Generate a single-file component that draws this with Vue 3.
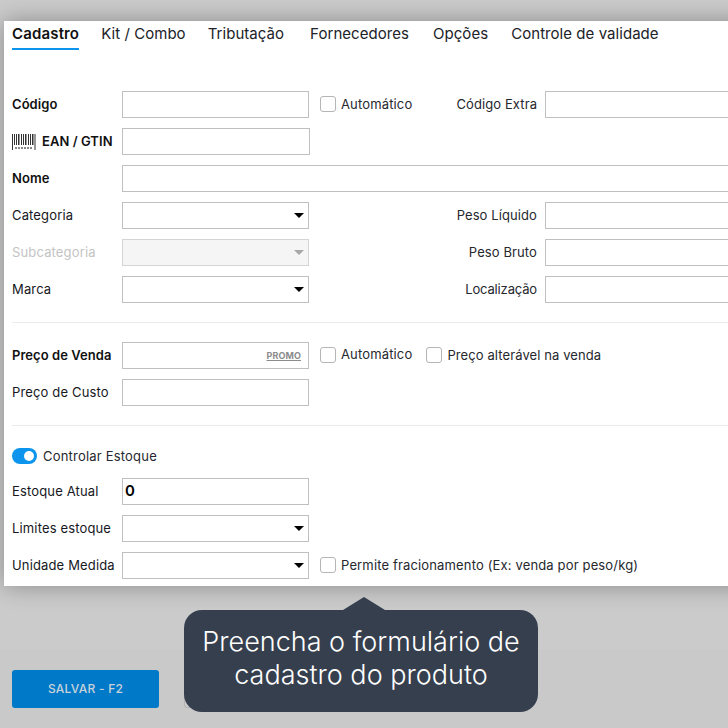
<template>
  <div class="page">
    <main class="card">
      <nav class="tabs">
        <span v-for="(tab, i) in tabs" :key="tab" class="tab" :class="{ active: i === 0 }">{{ tab }}</span>
      </nav>

      <section class="block first">
        <div class="row">
          <label class="label bold">Código</label>
          <input class="field" />
          <label class="check"><span class="box"></span>Automático</label>
          <label class="side-label">Código Extra</label>
          <input class="field grow" />
        </div>
        <div class="row">
          <label class="label bold ean">
            <svg class="barcode" width="24" height="16" viewBox="0 0 24 16">
              <g fill="#333">
                <rect x="0" y="0" width="1" height="16" />
                <rect x="2" y="0" width="1" height="11" />
                <rect x="4" y="0" width="1" height="11" />
                <rect x="6" y="0" width="1.5" height="11" />
                <rect x="9" y="0" width="1" height="11" />
                <rect x="11" y="0" width="1" height="11" />
                <rect x="13" y="0" width="1.5" height="11" />
                <rect x="16" y="0" width="1" height="11" />
                <rect x="18" y="0" width="1" height="11" />
                <rect x="20" y="0" width="1.5" height="11" />
                <rect x="22.5" y="0" width="1" height="16" />
              </g>
              <g fill="#888">
                <rect x="3" y="13" width="2" height="2" />
                <rect x="6" y="13" width="2" height="2" />
                <rect x="9" y="13" width="2" height="2" />
                <rect x="12" y="13" width="2" height="2" />
                <rect x="15" y="13" width="2" height="2" />
                <rect x="18" y="13" width="2" height="2" />
              </g>
            </svg>
            <span class="lift">EAN / GTIN</span>
          </label>
          <input class="field wide-1" />
        </div>
        <div class="row">
          <label class="label bold">Nome</label>
          <input class="field grow" />
        </div>
        <div class="row">
          <label class="label">Categoria</label>
          <div class="field select"><i class="caret"></i></div>
          <label class="side-label far">Peso Líquido</label>
          <input class="field grow" />
        </div>
        <div class="row">
          <label class="label muted">Subcategoria</label>
          <div class="field select disabled"><i class="caret"></i></div>
          <label class="side-label far">Peso Bruto</label>
          <input class="field grow" />
        </div>
        <div class="row">
          <label class="label">Marca</label>
          <div class="field select"><i class="caret"></i></div>
          <label class="side-label far tight">Localização</label>
          <input class="field grow" />
        </div>
      </section>

      <section class="block">
        <div class="row">
          <label class="label bold">Preço de Venda</label>
          <div class="field promo-field"><span class="promo">PROMO</span></div>
          <label class="check"><span class="box"></span><span class="lift">Automático</span></label>
          <label class="check second"><span class="box"></span>Preço alterável na venda</label>
        </div>
        <div class="row">
          <label class="label">Preço de Custo</label>
          <input class="field" />
        </div>
      </section>

      <section class="block last">
        <div class="toggle-row">
          <span class="toggle"><span class="knob"></span></span>
          <span>Controlar Estoque</span>
        </div>
        <div class="row">
          <label class="label">Estoque Atual</label>
          <input class="field value" value="0" />
        </div>
        <div class="row">
          <label class="label">Limites estoque</label>
          <div class="field select"><i class="caret"></i></div>
        </div>
        <div class="row">
          <label class="label">Unidade Medida</label>
          <div class="field select"><i class="caret"></i></div>
          <label class="check"><span class="box"></span>Permite fracionamento (Ex: venda por peso/kg)</label>
        </div>
      </section>
    </main>

    <footer class="footer">
      <button class="save"><span class="lift">SALVAR - F2</span></button>
      <button class="ghost"></button>
    </footer>

    <div class="tip">
      <span class="tip-arrow"></span>
      Preencha o formulário de<br />cadastro do produto
    </div>
  </div>
</template>

<script setup>
const tabs = ['Cadastro', 'Kit / Combo', 'Tributação', 'Fornecedores', 'Opções', 'Controle de validade']
</script>

<style>
html, body { margin: 0; background: #cbcbcb; overflow: hidden; }
</style>

<style scoped>
.page {
  position: relative;
  width: 728px;
  height: 728px;
  overflow: hidden;
  padding-top: 21px;
  box-sizing: border-box;
  background: #cbcbcb;
  font-family: Inter, "Liberation Sans", sans-serif;
  font-size: 13px;
  color: #16181d;
}
.card {
  box-sizing: border-box;
  width: 900px;
  height: 565px;
  margin-left: 4px;
  padding: 0 8px;
  background: #fff;
  box-shadow: 0 0 22px rgba(0, 0, 0, 0.32);
}
.tabs {
  display: flex;
  height: 29px;
  align-items: flex-start;
  font-size: 15px;
  line-height: 25px;
  letter-spacing: 0.05px;
  color: #202228;
}
.tab { margin-right: 22px; height: 29px; box-sizing: border-box; }
.tab:nth-child(3) { margin-right: 26px; }
.tab:nth-child(4) { margin-right: 24px; }
.tab:nth-child(5) { margin-right: 23px; }
.tab.active {
  font-weight: 600;
  color: #111;
  letter-spacing: 0.15px;
  border-bottom: 2px solid #0d95ee;
}
.block {
  width: 860px;
  border-bottom: 1px solid #ececec;
  padding-bottom: 9px;
  margin-bottom: 19px;
}
.block.first { margin-top: 41px; }
.block.last { border-bottom: 0; margin: 22px 0 0; padding: 0; }
.row {
  display: flex;
  align-items: center;
  height: 27px;
  margin-bottom: 10px;
}
.label {
  width: 110px;
  flex: none;
  padding-bottom: 2px;
  white-space: nowrap;
  letter-spacing: 0.15px;
}
.bold { font-weight: 600; color: #111; letter-spacing: 0.05px; }
.muted { color: #c4c4c4; }
.ean { display: flex; align-items: center; gap: 6px; padding-bottom: 0; }
.barcode { flex: none; }
.field {
  box-sizing: border-box;
  width: 187px;
  height: 27px;
  flex: none;
  margin: 0;
  padding: 0 5px;
  background: #fff;
  border: 1px solid #c0c0c0;
  border-radius: 0;
  font: inherit;
  outline: none;
  position: relative;
}
.wide-1 { width: 188px; }
.grow { flex: 1 0 auto; width: 300px; }
.value { font-size: 15px; font-weight: 600; padding: 0 0 2px 2px; }
.select .caret {
  position: absolute;
  right: 4px;
  top: 10px;
  width: 0;
  height: 0;
  border-left: 5px solid transparent;
  border-right: 5px solid transparent;
  border-top: 5px solid #000;
}
.disabled { background: #f5f5f5; border-color: #d4d4d4; }
.disabled .caret { border-top-color: #a8a8a8; }
.promo-field { display: flex; align-items: center; justify-content: flex-end; padding-right: 7px; }
.promo {
  font-size: 9px;
  font-weight: 700;
  color: #8b8b8b;
  text-decoration: underline;
  letter-spacing: 0.1px;
}
.check {
  display: flex;
  align-items: center;
  gap: 5px;
  margin-left: 11px;
  padding-bottom: 1px;
  white-space: nowrap;
  letter-spacing: 0.15px;
  color: #26282e;
}
.check.second { margin-left: 14px; letter-spacing: 0.1px; }
.lift { display: inline-block; padding-bottom: 2px; }
.box {
  box-sizing: border-box;
  width: 16px;
  height: 16px;
  border: 1px solid #b5b5b5;
  border-radius: 3px;
  background: #fff;
}
.side-label {
  margin-left: 44px;
  margin-right: 8px;
  padding-bottom: 2px;
  white-space: nowrap;
  letter-spacing: 0.1px;
  color: #26282e;
}
.side-label.far { flex: none; width: 228px; margin-left: 0; text-align: right; }
.side-label.tight { letter-spacing: -0.15px; }
.toggle-row {
  display: flex;
  align-items: center;
  gap: 6px;
  height: 16px;
  margin-bottom: 14px;
  letter-spacing: 0.2px;
  color: #26282e;
}
.toggle {
  box-sizing: border-box;
  width: 25px;
  height: 16px;
  padding: 3px 3px 3px 12px;
  border-radius: 8px;
  background: #0d95ee;
}
.knob { display: block; width: 10px; height: 10px; border-radius: 50%; background: #fff; }
.footer {
  box-sizing: border-box;
  display: flex;
  gap: 25px;
  height: 78px;
  margin-top: 64px;
  padding: 19px 12px;
  border-top: 1px solid #c7c7c7;
  background: #c9c9c9;
}
.save {
  width: 147px;
  height: 38px;
  padding: 0;
  border: 0;
  border-radius: 3px;
  background: #0079c9;
  color: #c9d2d9;
  font: 500 12px Inter, "Liberation Sans", sans-serif;
  letter-spacing: 0.25px;
}
.ghost {
  width: 200px;
  height: 38px;
  border: 1px solid #b4b4b4;
  border-radius: 3px;
  background: #cacaca;
}
.tip {
  position: absolute;
  left: 184px;
  top: 610px;
  box-sizing: border-box;
  width: 354px;
  height: 102px;
  padding-top: 15px;
  border-radius: 18px;
  background: #363f4e;
  color: #fff;
  text-align: center;
  font-size: 27px;
  line-height: 33px;
  font-weight: 300;
}
.tip-arrow {
  position: absolute;
  left: 159px;
  top: -13px;
  width: 0;
  height: 0;
  border-left: 21px solid transparent;
  border-right: 21px solid transparent;
  border-bottom: 13px solid #363f4e;
}
</style>
